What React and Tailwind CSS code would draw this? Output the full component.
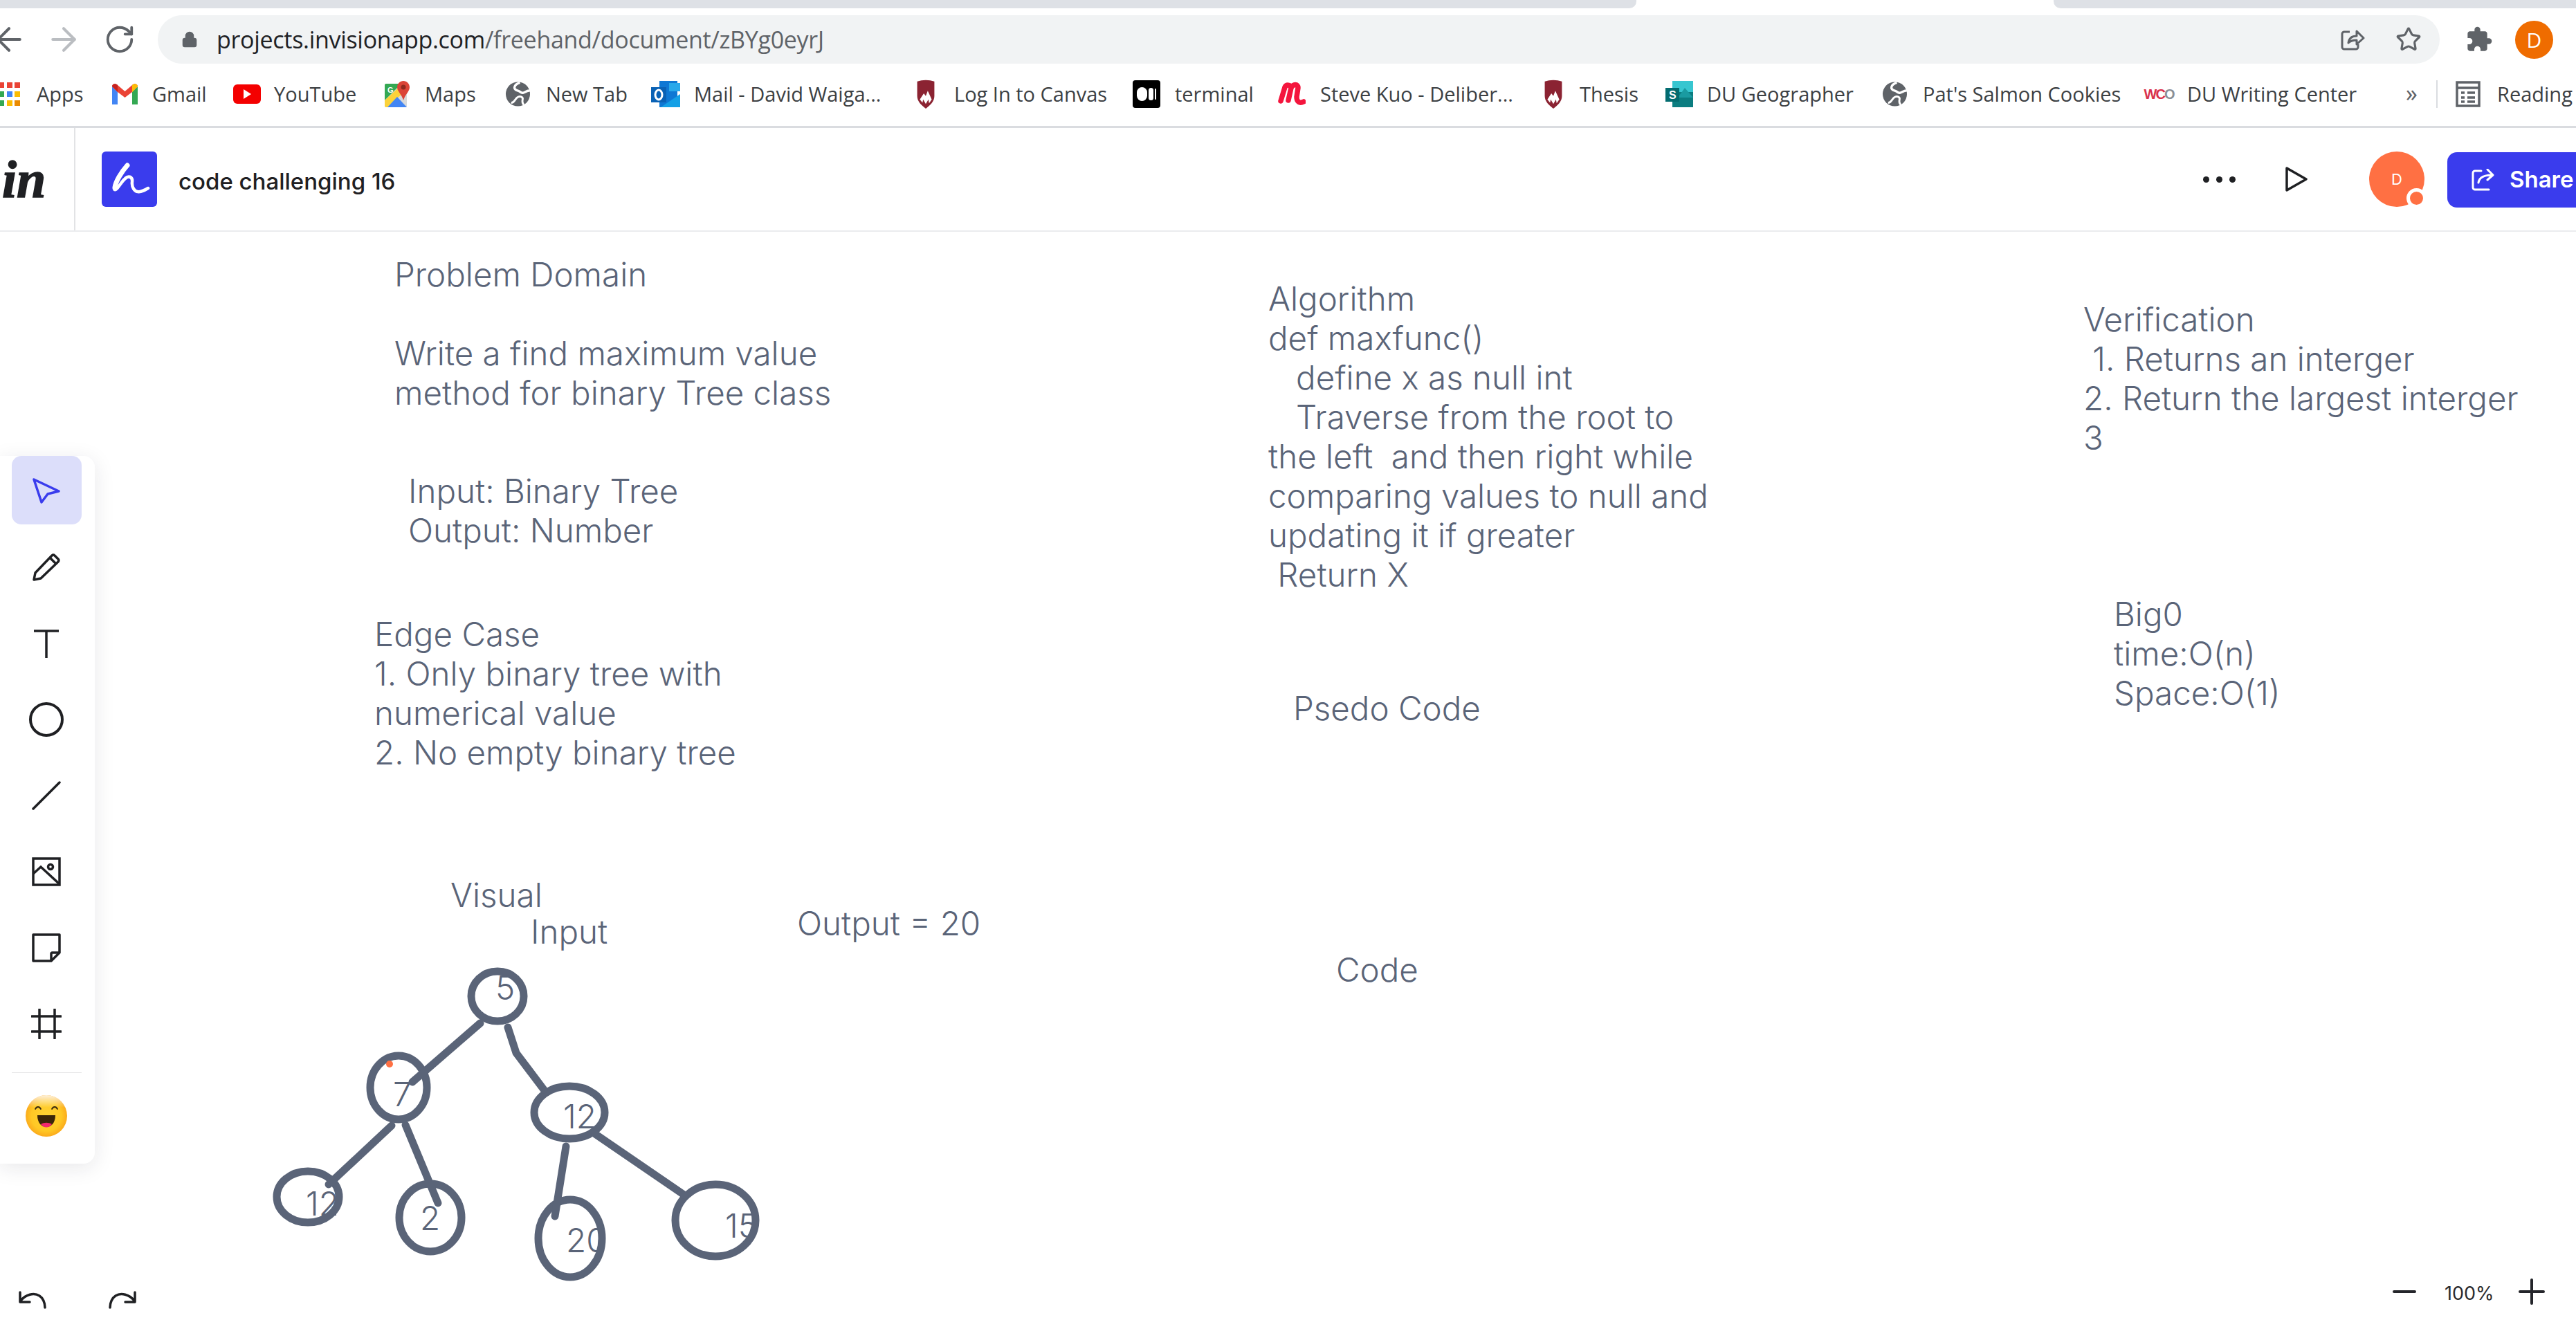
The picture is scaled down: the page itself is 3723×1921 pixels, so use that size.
import React from 'react';
import { ArrowLeft, ArrowRight, RotateCw, Lock, Star } from 'lucide-react';

const Globe = () => (
    <svg viewBox="0 0 38 38" className="w-[37px] h-[38px]">
        <circle cx="19" cy="19" r="18" fill="#5f6368" />
        <path d="M22 2C13 5 11 12 19 14c4 1 4 4 8 3 4-1 6-4 10-3" fill="none" stroke="#fff" strokeWidth="3.500" />
        <path d="M9 32c5 0 5-5 9-8 4-3 9-1 8 3-1 4 0 6 2 8" fill="none" stroke="#fff" strokeWidth="3" />
    </svg>
);

const Shield = () => (
    <svg viewBox="0 0 30 44" className="w-[30px] h-[42px]">
        <path d="M2 3c8-3 18-3 26 0v22c0 8-6 14-13 19C8 39 2 33 2 25z" fill="#8b2332" />
        <path d="M6 30l6-9 3 4 3-8 6 13-4 6-1-6-4 7-4-7-1 5z" fill="#fff" />
    </svg>
);

const AppsGrid = () => (
    <svg viewBox="0 0 29 34" className="w-[29px] h-[34px]">
        <rect x="-2" y="0" width="8" height="8" fill="#ea4335" />
        <rect x="10" y="0" width="8" height="8" fill="#ea4335" />
        <rect x="21" y="0" width="8" height="8" fill="#ea4335" />
        <rect x="-2" y="13" width="8" height="8" fill="#34a853" />
        <rect x="10" y="13" width="8" height="8" fill="#4285f4" />
        <rect x="21" y="13" width="8" height="8" fill="#fbbc04" />
        <rect x="-2" y="26" width="8" height="8" fill="#34a853" />
        <rect x="10" y="26" width="8" height="8" fill="#fbbc04" />
        <rect x="21" y="26" width="8" height="8" fill="#ea8a00" />
    </svg>
);

const GmailIcon = () => (
    <svg viewBox="0 0 37 30" className="w-[37px] h-[30px]">
        <path d="M0 4v26h8V12z" fill="#4285f4" />
        <path d="M37 4v26h-8V12z" fill="#34a853" />
        <path d="M0 4c0-4 5-5 8-2l10.500 9L29 2c3-3 8-2 8 2l-8 8-10.500 8L8 12z" fill="#ea4335" />
        <path d="M0 4c0-4 5-5 8-2v10z" fill="#c5221f" />
        <path d="M37 4c0-4-5-5-8-2v10z" fill="#fbbc04" />
    </svg>
);

const YoutubeIcon = () => (
    <div className="w-[40px] h-[28px] rounded-md bg-[#f40000] flex items-center justify-center">
        <div className="w-0 h-0 border-y-[7px] border-y-transparent border-l-[11px] border-l-white" />
    </div>
);

const MapsIcon = () => (
    <svg viewBox="0 0 36 38" className="w-[36px] h-[38px]">
        <rect x="0" y="4" width="32" height="34" rx="2" fill="#d8d9da" />
        <path d="M0 6a2 2 0 0 1 2-2h22L0 28z" fill="#34a853" />
        <path d="M0 28L24 6l4 10L4 38H2a2 2 0 0 1-2-2z" fill="#fbd23a" />
        <path d="M4 38l14-15 14 15z" fill="#4285f4" />
        <path d="M27 0c5 0 9 4 9 9 0 6-6 10-9 19-2-8-9-13-9-19 0-5 4-9 9-9z" fill="#db4437" />
        <circle cx="27" cy="9" r="3.500" fill="#8f2a1f" />
        <text x="4" y="17" fontSize="11" fontWeight="700" fill="#fff" fontFamily="Liberation Sans">G</text>
    </svg>
);

const OutlookIcon = () => (
    <svg viewBox="0 0 42 38" className="w-[42px] h-[38px]">
        <rect x="12" y="0" width="26" height="38" fill="#0f78d4" />
        <rect x="26" y="3" width="16" height="12" fill="#28a8ea" />
        <path d="M14 38l28-19v19z" fill="#14a0e6" />
        <rect x="0" y="9" width="22" height="22" fill="#0a62b5" />
        <ellipse cx="11" cy="20" rx="5" ry="7" fill="none" stroke="#fff" strokeWidth="3" />
    </svg>
);

const MediumIcon = () => (
    <div className="w-[40px] h-[40px] rounded-sm bg-black flex items-center justify-center gap-[2px]">
        <div className="w-[15px] h-[20px] rounded-full bg-white" />
        <div className="w-[7px] h-[18px] rounded-full bg-white" />
        <div className="w-[2px] h-[16px] rounded-full bg-white" />
    </div>
);

const SteveIcon = () => (
    <svg viewBox="0 0 40 36" className="w-[40px] h-[36px]" fill="none" stroke="#f4153d" strokeWidth="7.500" strokeLinecap="round" strokeLinejoin="round">
        <path d="M4 28L10 8C12 4 18 4 19 9L15 27M19 9C22 3 29 3 29 9L27 22C27 29 31 32 37 29" />
    </svg>
);

const SharepointIcon = () => (
    <svg viewBox="0 0 40 38" className="w-[40px] h-[38px]">
        <rect x="10" y="0" width="30" height="38" fill="#0b7d80" />
        <rect x="10" y="0" width="30" height="16" fill="#37c6d0" />
        <path d="M18 24l10-14 12 14z" fill="#1a9ba1" />
        <rect x="0" y="10" width="20" height="20" fill="#036c70" />
        <text x="5" y="26" fontSize="16" fontWeight="700" fill="#fff" fontFamily="Liberation Sans">S</text>
    </svg>
);

const WcoIcon = () => (
    <div className="w-[42px] flex justify-center items-center text-[20px] leading-none tracking-[-2px] font-bold font-['Liberation_Sans']">
        <span className="text-[#d9324c]">WC</span>
        <span className="text-[#8a8f96]">O</span>
    </div>
);

const ReadingIcon = () => (
    <svg viewBox="0 0 36 38" className="w-[36px] h-[38px]" fill="none" stroke="#5f6368" strokeWidth="3.500">
        <rect x="2" y="2" width="32" height="34" />
        <path d="M2 10h32M8 17h5M17 17h11M8 24h5M17 24h11M8 30h5M17 30h11" />
    </svg>
);

const PuzzleIcon = () => (
    <svg viewBox="0 0 24 24" className="w-[40px] h-[40px]" fill="#5f6368">
        <path d="M20.500 11H19V7c0-1.100-.9-2-2-2h-4V3.500a2.500 2.500 0 0 0-5 0V5H4c-1.100 0-1.990.9-1.990 2v3.800H3.500a2.700 2.700 0 0 1 0 5.400H2V20c0 1.100.9 2 2 2h3.800v-1.500a2.700 2.700 0 0 1 5.400 0V22H17c1.100 0 2-.9 2-2v-4h1.500a2.500 2.500 0 0 0 0-5z" />
    </svg>
);

const ShareArrow = () => (
    <svg viewBox="0 0 40 32" className="w-[40px] h-[32px]" fill="none" stroke="#fff" strokeWidth="3" strokeLinecap="round" strokeLinejoin="round">
        <path d="M14 3H5a3 3 0 0 0-3 3v21a3 3 0 0 0 3 3h20" />
        <path d="M10 20c1-7 8-11 20-11M23 1l8 8-8 7" />
    </svg>
);

const ChromeShare = () => (
    <svg viewBox="0 0 36 32" className="w-[36px] h-[32px]" fill="none" stroke="#5f6368" strokeWidth="3" strokeLinejoin="round">
        <path d="M14 5H6a3 3 0 0 0-3 3v19a3 3 0 0 0 3 3h17a3 3 0 0 0 3-3v-4" />
        <path d="M12 21c1-7 5-10 12-10V4l10 10-10 9v-6c-6 0-9 1-12 4z" />
    </svg>
);

const PointerIcon = () => (
    <svg viewBox="0 0 42 38" className="w-[42px] h-[38px]" fill="none" stroke="#3a3ced" strokeWidth="3.500" strokeLinejoin="round">
        <path d="M3 3l36 17-16 4-9 12z" />
    </svg>
);

const PencilIcon = () => (
    <svg viewBox="0 0 42 42" className="w-[42px] h-[42px]" fill="none" stroke="#1f2023" strokeWidth="3.500" strokeLinejoin="round">
        <path d="M3 39l2-10L29 4a3 3 0 0 1 4 0l5 5a3 3 0 0 1 0 4L13 37zM26 7l9 9" />
    </svg>
);

const ImageIcon = () => (
    <svg viewBox="0 0 42 42" className="w-[42px] h-[42px]" fill="none" stroke="#1f2023" strokeWidth="3.500">
        <rect x="2" y="2" width="38" height="38" />
        <path d="M2 24l11-10 26 24" />
        <circle cx="27" cy="14" r="3.500" />
    </svg>
);

const NoteIcon = () => (
    <svg viewBox="0 0 42 42" className="w-[42px] h-[42px]" fill="none" stroke="#1f2023" strokeWidth="3.500" strokeLinejoin="round">
        <path d="M2 2h38v26L28 40H2z" />
        <path d="M40 28H29a2 2 0 0 0-1 1v11" />
    </svg>
);

const HashIcon = () => (
    <svg viewBox="0 0 44 44" className="w-[44px] h-[44px]" fill="none" stroke="#1f2023" strokeWidth="3.500" strokeLinecap="round">
        <path d="M1 11h42M1 33h42M12 1v42M34 1v42" />
    </svg>
);

const EmojiIcon = () => (
    <svg viewBox="0 0 62 62" className="w-[62px] h-[62px]">
        <defs>
            <radialGradient id="face" cx="50%" cy="50%" r="50%">
                <stop offset="0%" stopColor="#ffd233" />
                <stop offset="72%" stopColor="#ffc825" />
                <stop offset="100%" stopColor="#fbab1c" />
            </radialGradient>
            <linearGradient id="shine" x1="0" y1="0" x2="0" y2="1">
                <stop offset="0%" stopColor="#fff" stopOpacity="0.85" />
                <stop offset="30%" stopColor="#fff" stopOpacity="0" />
            </linearGradient>
        </defs>
        <circle cx="31" cy="31" r="30" fill="url(#face)" />
        <circle cx="31" cy="31" r="30" fill="url(#shine)" />
        <path d="M15 21c2-4 6-4 8 0M39 21c2-4 6-4 8 0" fill="none" stroke="#3a2a10" strokeWidth="1.800" strokeLinecap="round" />
        <path d="M18 30h26c0 11-6 17-13 17s-13-6-13-17z" fill="#3b2508" />
        <path d="M23 43c5-3 11-3 16 0-5 6-11 6-16 0z" fill="#f2286e" />
    </svg>
);

const UndoIcon = () => (
    <svg viewBox="0 0 40 26" className="w-[40px] h-[26px]" fill="none" stroke="#1f2023" strokeWidth="3.500" strokeLinecap="round" strokeLinejoin="round">
        <path d="M2 2v14h14M3 14C10 5 22 2 30 7c5 3 8 10 8 17" />
    </svg>
);

const RedoIcon = () => (
    <svg viewBox="0 0 40 26" className="w-[40px] h-[26px]" fill="none" stroke="#1f2023" strokeWidth="3.500" strokeLinecap="round" strokeLinejoin="round">
        <path d="M38 2v14H24M37 14C30 5 18 2 10 7c-5 3-8 10-8 17" />
    </svg>
);

const Tree = () => (
    <svg viewBox="0 0 740 530" className="absolute left-[380px] top-[1000px] w-[740px] h-[530px]" fill="none" stroke="#5a6478" strokeWidth="11" strokeLinecap="round">
        <ellipse cx="339" cy="105" rx="38" ry="36" />
        <ellipse cx="196" cy="237" rx="41" ry="46" />
        <ellipse cx="443" cy="273" rx="51" ry="38" />
        <ellipse cx="65" cy="395" rx="45" ry="37" />
        <ellipse cx="242" cy="425" rx="45" ry="49" />
        <ellipse cx="444" cy="455" rx="46" ry="56" />
        <ellipse cx="654" cy="429" rx="58" ry="52" />
        <path d="M314 144L216 229" />
        <path d="M354 150L366 187L406 240" />
        <path d="M186 292L95 377" />
        <path d="M206 291L253 404" />
        <path d="M438 322L422 423" />
        <path d="M480 304L610 393" />
        <circle cx="183" cy="203" r="5" fill="#ff7043" stroke="none" />
    </svg>
);

const App = () => {
    return (
        <div className="w-[3723px] h-[1921px] overflow-hidden bg-white flex flex-col font-['Open_Sans',sans-serif]">
            {/* tab strip */}
            <div className="h-[12px] flex shrink-0">
                <div className="w-[2365px] bg-[#dee1e6] rounded-br-[10px]" />
                <div className="w-[603px] bg-white" />
                <div className="flex-1 bg-[#dee1e6] rounded-bl-[10px]" />
            </div>

            {/* url row */}
            <div className="h-[80px] shrink-0 flex items-end">
                <div className="w-[228px] h-[70px] flex items-center relative">
                    <ArrowLeft className="absolute left-[-14px] text-[#5f6368]" size={54} strokeWidth={1.800} />
                    <ArrowRight className="absolute left-[65px] text-[#babdc1]" size={54} strokeWidth={1.800} />
                    <RotateCw className="absolute left-[150px] text-[#5f6368]" size={46} strokeWidth={2} />
                </div>
                <div className="w-[3298px] h-[70px] rounded-full bg-[#f1f3f4] flex items-center pl-[34px] pr-[26px]">
                    <Lock className="text-[#5f6368] fill-[#5f6368]" size={24} strokeWidth={2.500} />
                    <div className="ml-[27px] text-[34px] text-[#5f6368] tracking-[-0.3px] flex-1">
                        <span className="text-[#202124]">projects.invisionapp.com</span>/freehand/document/zBYg0eyrJ
                    </div>
                    <ChromeShare />
                    <Star className="ml-[44px] text-[#5f6368]" size={38} strokeWidth={2} />
                </div>
                <div className="flex-1 h-[70px] flex items-center pl-[37px]">
                    <PuzzleIcon />
                    <div className="ml-[32px] w-[55px] h-[55px] rounded-full bg-[#ef6c00] text-white text-[30px] flex items-center justify-center">D</div>
                </div>
            </div>

            {/* bookmarks */}
            <div className="h-[93px] shrink-0 border-b-[3px] border-[#dadce0] flex items-center text-[29px] text-[#3c4043] whitespace-nowrap overflow-hidden pb-[3px]">
                <div className="w-[162px] shrink-0 flex items-center gap-[24px]"><AppsGrid /><span>Apps</span></div>
                <div className="w-[175px] shrink-0 flex items-center gap-[21px]"><GmailIcon /><span>Gmail</span></div>
                <div className="w-[219px] shrink-0 flex items-center gap-[19px]"><YoutubeIcon /><span>YouTube</span></div>
                <div className="w-[174px] shrink-0 flex items-center gap-[22px]"><MapsIcon /><span>Maps</span></div>
                <div className="w-[211px] shrink-0 flex items-center gap-[22px]"><Globe /><span>New Tab</span></div>
                <div className="w-[382px] shrink-0 flex items-center gap-[20px]"><OutlookIcon /><span>Mail - David Waiga...</span></div>
                <div className="w-[314px] shrink-0 flex items-center gap-[26px]"><Shield /><span>Log In to Canvas</span></div>
                <div className="w-[210px] shrink-0 flex items-center gap-[21px]"><MediumIcon /><span>terminal</span></div>
                <div className="w-[383px] shrink-0 flex items-center gap-[21px]"><SteveIcon /><span>Steve Kuo - Deliber...</span></div>
                <div className="w-[177px] shrink-0 flex items-center gap-[23px]"><Shield /><span>Thesis</span></div>
                <div className="w-[313px] shrink-0 flex items-center gap-[20px]"><SharepointIcon /><span>DU Geographer</span></div>
                <div className="w-[379px] shrink-0 flex items-center gap-[22px]"><Globe /><span>Pat&apos;s Salmon Cookies</span></div>
                <div className="w-[378px] shrink-0 flex items-center gap-[20px]"><WcoIcon /><span>DU Writing Center</span></div>
                <div className="w-[44px] shrink-0 text-[34px] leading-none text-[#5f6368] pb-[4px]">»</div>
                <div className="h-[40px] w-[2px] shrink-0 bg-[#dadce0]" />
                <div className="ml-[26px] shrink-0 flex items-center gap-[24px]"><ReadingIcon /><span>Reading</span></div>
            </div>

            {/* app header */}
            <div className="h-[150px] shrink-0 border-b-2 border-[#ebecee] flex items-center">
                <div className="w-[109px] h-full border-r-2 border-[#e2e3e5] flex items-center pl-[3px]">
                    <span className="font-['Liberation_Serif'] italic font-bold text-[76px] leading-none text-[#1f2023] [-webkit-text-stroke:1.5px_#1f2023]">in</span>
                </div>
                <div className="ml-[38px] w-[80px] h-[80px] rounded-[6px] bg-[#3a3ced] flex items-center justify-center">
                    <svg viewBox="0 0 80 80" className="w-[80px] h-[80px]" fill="none" stroke="#fff" strokeWidth="4.500" strokeLinecap="round" strokeLinejoin="round">
                        <path d="M37 20C28 30 18 45 18 54C20 60 28 44 33 40C38 34 45 36 44 44C43 52 48 58 52 58C57 59 62 56 67 53" />
                        <path d="M37 20C28 30 20 44 19 52" strokeWidth="7" />
                    </svg>
                </div>
                <span className="ml-[31px] pt-[7px] font-['Inter'] font-medium text-[33px] text-[#1f2023] flex-1">code challenging 16</span>
                <div className="flex gap-[10px] items-center">
                    <div className="w-[9px] h-[9px] rounded-full bg-[#1f2023]" />
                    <div className="w-[9px] h-[9px] rounded-full bg-[#1f2023]" />
                    <div className="w-[9px] h-[9px] rounded-full bg-[#1f2023]" />
                </div>
                <svg viewBox="0 0 34 36" className="ml-[71px] w-[34px] h-[36px]" fill="none" stroke="#1f2023" strokeWidth="3.500" strokeLinejoin="round">
                    <path d="M3 2l28 16L3 34z" />
                </svg>
                <div className="relative ml-[88px] w-[80px] h-[80px] rounded-full bg-[#ff7043] flex items-center justify-center text-white text-[22px] font-['Inter']">
                    D
                    <div className="absolute right-[-3px] bottom-[-2px] w-[29px] h-[29px] rounded-full bg-[#ff7043] border-[5px] border-white" />
                </div>
                <div className="ml-[33px] mt-[2px] flex-none w-[186px] h-[80px] rounded-l-[14px] bg-[#3a3ced] flex items-center pl-[35px] gap-[15px] text-white text-[33px] font-semibold font-['Inter']">
                    <ShareArrow />
                    <span>Share</span>
                </div>
            </div>

            {/* freehand canvas */}
            <div className="relative flex-1 font-['Inter'] font-light text-[47.5px] leading-[57px] text-[#5a6478] whitespace-pre">
                <div className="absolute left-[570px] top-[33px]">{'Problem Domain\n\nWrite a find maximum value\nmethod for binary Tree class'}</div>
                <div className="absolute left-[590px] top-[346px]">{'Input: Binary Tree\nOutput: Number'}</div>
                <div className="absolute left-[541px] top-[553px]">{'Edge Case\n1. Only binary tree with\nnumerical value\n2. No empty binary tree'}</div>
                <div className="absolute left-[651px] top-[930px]">Visual</div>
                <div className="absolute left-[767px] top-[983px]">Input</div>
                <div className="absolute left-[1152px] top-[971px]">Output = 20</div>
                <div className="absolute left-[1833px] top-[68px]">{'Algorithm\ndef maxfunc()\n   define x as null int\n   Traverse from the root to\nthe left  and then right while\ncomparing values to null and\nupdating it if greater\n Return X'}</div>
                <div className="absolute left-[1869px] top-[660px]">Psedo Code</div>
                <div className="absolute left-[1931px] top-[1038px]">Code</div>
                <div className="absolute left-[3011px] top-[98px]">{'Verification\n 1. Returns an interger\n2. Return the largest interger\n3'}</div>
                <div className="absolute left-[3055px] top-[524px]">{'Big0\ntime:O(n)\nSpace:O(1)'}</div>

                <Tree />
                <div className="absolute left-[716px] top-[1064px]">5</div>
                <div className="absolute left-[568px] top-[1218px]">7</div>
                <div className="absolute left-[814px] top-[1250px] w-[46px] overflow-hidden">12</div>
                <div className="absolute left-[442px] top-[1376px] w-[44px] overflow-hidden">12</div>
                <div className="absolute left-[607px] top-[1397px]">2</div>
                <div className="absolute left-[818px] top-[1429px] w-[47px] overflow-hidden">20</div>
                <div className="absolute left-[1048px] top-[1408px] w-[39px] overflow-hidden">15</div>

                {/* tools */}
                <div className="absolute left-0 top-[324px] w-[137px] h-[1023px] bg-white rounded-r-[16px] shadow-[0_6px_30px_rgba(30,30,50,0.10)] flex flex-col items-center pr-[3px]">
                    <div className="w-[101px] h-[99px] shrink-0 rounded-[14px] bg-[#dcdefa] flex items-center justify-center"><PointerIcon /></div>
                    <div className="h-[110px] mt-[7px] flex items-center justify-center"><PencilIcon /></div>
                    <div className="h-[110px] flex items-center justify-center">
                        <svg viewBox="0 0 36 42" className="w-[36px] h-[42px]" fill="none" stroke="#1f2023" strokeWidth="3.500"><path d="M0 3h36M18 3v39" /></svg>
                    </div>
                    <div className="h-[110px] flex items-center justify-center"><div className="w-[50px] h-[50px] rounded-full border-[4px] border-[#1f2023]" /></div>
                    <div className="h-[110px] flex items-center justify-center">
                        <svg viewBox="0 0 42 42" className="w-[42px] h-[42px]" fill="none" stroke="#1f2023" strokeWidth="3.500" strokeLinecap="round"><path d="M2 40L40 2" /></svg>
                    </div>
                    <div className="h-[110px] flex items-center justify-center"><ImageIcon /></div>
                    <div className="h-[110px] flex items-center justify-center"><NoteIcon /></div>
                    <div className="h-[110px] flex items-center justify-center"><HashIcon /></div>
                    <div className="w-[101px] h-px shrink-0 bg-[#e4e4e6] mt-[15px]" />
                    <div className="mt-[31px]"><EmojiIcon /></div>
                </div>

                {/* undo redo */}
                <div className="absolute left-[27px] top-[1531px] flex gap-[90px]">
                    <UndoIcon />
                    <RedoIcon />
                </div>

                {/* zoom */}
                <div className="absolute left-[3458px] top-[1512px] h-[40px] flex items-center text-[#2a2b2e]">
                    <div className="w-[34px] h-[4px] rounded-full bg-[#24252a]" />
                    <span className="ml-[41px] w-[107px] pt-[4px] text-[27px] leading-none font-normal">100%</span>
                    <svg viewBox="0 0 38 38" className="w-[38px] h-[38px]" fill="none" stroke="#24252a" strokeWidth="4" strokeLinecap="round"><path d="M2 19h34M19 2v34" /></svg>
                </div>
            </div>
        </div>
    );
};

export default App;
